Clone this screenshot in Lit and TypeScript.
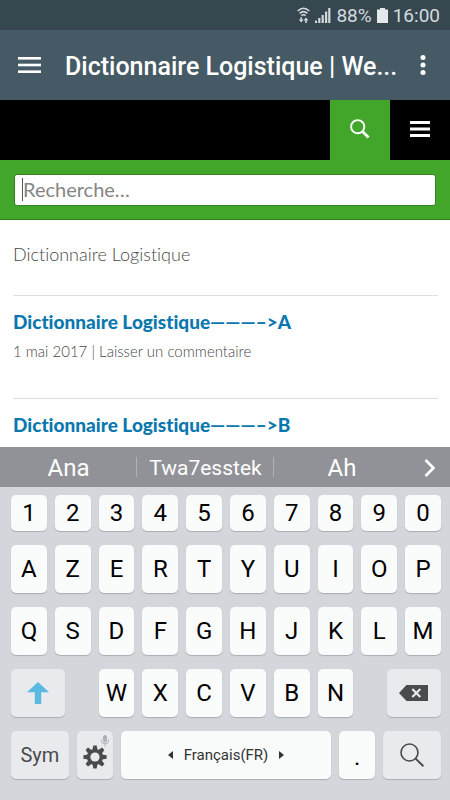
import { LitElement, html, css, svg, nothing } from "lit";
import { customElement } from "lit/decorators.js";

const wifi = svg`<svg width="13" height="17" viewBox="0 0 13 17" fill="none" stroke="#d3dade" stroke-width="1.5">
  <path d="M0.6 4Q6.5 -1.6 12.4 4M2.6 6.4Q6.5 2.8 10.4 6.4M4.4 8.6Q6.5 6.8 8.6 8.6"/>
  <path d="M4.2 10.2V13M9 16V13" stroke-width="1.6"/>
  <path d="M1.8 12.4H6.6L4.2 15.6ZM6.6 13.6H11.4L9 10.4Z" fill="#d3dade" stroke="none"/></svg>`;

const signal = svg`<svg width="16" height="16" viewBox="0 0 16 16" fill="#d3dade">
  <rect x="0" y="13.5" width="2" height="2.5"/><rect x="3.2" y="11" width="2.2" height="5"/>
  <rect x="6.6" y="8" width="2.2" height="8"/><rect x="10" y="4.5" width="2.2" height="11.5"/>
  <rect x="13.2" y="1" width="2.2" height="15"/></svg>`;

const battery = svg`<svg width="11" height="15" viewBox="0 0 11 15" fill="#e3e8ea">
  <path d="M3 0h5v1.5h3V15H0V1.5h3z"/></svg>`;

const bars = (w: number, h: number, t: number) => svg`<svg width=${w} height=${h} viewBox="0 0 ${w} ${h}" fill="#fff">
  <rect y="0" width=${w} height=${t}/><rect y=${(h - t) / 2} width=${w} height=${t}/><rect y=${h - t} width=${w} height=${t}/></svg>`;

const dots = svg`<svg width="6" height="20" viewBox="0 0 6 20" fill="#fff">
  <circle cx="3" cy="2.6" r="2.5"/><circle cx="3" cy="10" r="2.5"/><circle cx="3" cy="17.4" r="2.5"/></svg>`;

const siteSearch = svg`<svg width="20" height="20" viewBox="0 0 20 20" fill="none" stroke="#fff">
  <circle cx="7.7" cy="7.7" r="6.6" stroke-width="1.9"/><path d="M12.2 12.2L18.6 18.4" stroke-width="2.8"/></svg>`;

const chevron = svg`<svg width="12" height="18" viewBox="0 0 12 18" fill="none" stroke="#fff" stroke-width="2.6">
  <path d="M1.5 1L9.5 9L1.5 17"/></svg>`;

const shift = svg`<svg width="22" height="22" viewBox="0 0 22 22" fill="#5bb8de">
  <path d="M11 0L22 10.2H14.2V22H7.8V10.2H0z"/></svg>`;

const backspace = svg`<svg width="29" height="16" viewBox="0 0 29 16">
  <path d="M7.5 0H29V16H7.5L0 8z" fill="#4a4b4d"/>
  <path d="M13.3 4L21.3 12M21.3 4L13.3 12" stroke="#e8eaed" stroke-width="2.2"/></svg>`;

const gear = svg`<svg width="24" height="24" viewBox="-12 -12 24 24" fill="#4a4b4d">
  ${[0, 45, 90, 135].map((a) => svg`<path d="M-1.7 -11.6H1.7L2.5 -7V7L1.7 11.6H-1.7L-2.5 7V-7z" transform="rotate(${a})"/>`)}
  <circle r="8"/><circle r="4.6" fill="#e8eaed"/></svg>`;

const mic = svg`<svg width="8" height="12" viewBox="0 0 8 12" fill="none" stroke="#aeb1b6">
  <rect x="2.5" y="0.5" width="3" height="6.5" rx="1.5" fill="#aeb1b6"/><path d="M0.5 4.5V5.5Q0.5 8.8 4 8.8Q7.5 8.8 7.5 5.5V4.5M4 8.8V11.5"/></svg>`;

const keySearch = svg`<svg width="24" height="24" viewBox="0 0 24 24" fill="none" stroke="#4a4b4d">
  <circle cx="9.5" cy="9.5" r="8.5" stroke-width="1.6"/><path d="M15.6 15.6L23.4 23.2" stroke-width="2"/></svg>`;

const triangle = (d: string) => svg`<svg width="5" height="8" viewBox="0 0 5 8" fill="#333"><path d=${d}/></svg>`;

@customElement("soft-keyboard")
class SoftKeyboard extends LitElement {
  static styles = css`
    :host { display: block; font-family: Roboto, sans-serif; }
    button {
      font: inherit; border: 0; margin: 0; padding: 0; background: none; color: inherit;
      display: flex; align-items: center; justify-content: center;
    }
    .suggestions {
      display: grid; grid-template-columns: 137fr 137fr 136fr 40fr; height: 40px;
      background: #919297; color: #fff; font-size: 24px;
    }
    .suggestions button { padding-top: 2px; }
    .suggestion {
      white-space: nowrap;
      background: linear-gradient(#b0b1b5, #b0b1b5) right center / 1px 20px no-repeat;
    }
    .last { background: none; }
    .long { font-size: 21px; }
    .pad {
      background: #d3d7dc; padding: 8px 9px 21px 11px; color: #000; font-size: 24px;
      display: flex; flex-direction: column; gap: 14px;
    }
    .row { display: grid; grid-template-columns: repeat(10, 1fr); gap: 8px; grid-auto-rows: 48px; }
    .digits { grid-auto-rows: 36px; }
    .bottom { grid-template-columns: 58fr 36fr 211fr 36fr 58fr; }
    .key { background: #fafbfb; border-radius: 5px; box-shadow: 0 1px 1px #a9adb3; }
    .soft { background: #e8eaed; color: #4a4b4d; }
    .shift { grid-column: span 2; width: 68%; }
    .delete { grid-column: span 2; width: 68%; justify-self: end; }
    .sym { font-size: 20px; }
    .space { font-size: 15px; gap: 11px; color: #333; }
    .settings { position: relative; }
    .gear { display: flex; padding-top: 3px; }
    .mic { position: absolute; display: flex; top: 4px; right: 4px; }
    .dot { padding-top: 4px; }
  `;

  key(k: string) {
    return html`<button class="key">${k}</button>`;
  }

  render() {
    return html`
      <div class="suggestions">
        <button class="suggestion">Ana</button>
        <button class="suggestion long">Twa7esstek</button>
        <button class="suggestion last">Ah</button>
        <button class="more" aria-label="Plus de suggestions">${chevron}</button>
      </div>
      <div class="pad">
        <div class="row digits">${[..."1234567890"].map((k) => this.key(k))}</div>
        <div class="row">${[..."AZERTYUIOP"].map((k) => this.key(k))}</div>
        <div class="row">${[..."QSDFGHJKLM"].map((k) => this.key(k))}</div>
        <div class="row">
          <button class="key soft shift" aria-label="Majuscule">${shift}</button>
          ${[..."WXCVBN"].map((k) => this.key(k))}
          <button class="key soft delete" aria-label="Effacer">${backspace}</button>
        </div>
        <div class="row bottom">
          <button class="key soft sym">Sym</button>
          <button class="key soft settings" aria-label="Paramètres">
            <span class="gear">${gear}</span><span class="mic">${mic}</span>
          </button>
          <button class="key space">${triangle("M5 0V8L0 4z")}<span>Français(FR)</span>${triangle("M0 0V8L5 4z")}</button>
          <button class="key dot">.</button>
          <button class="key soft" aria-label="Rechercher">${keySearch}</button>
        </div>
      </div>
    `;
  }
}

const posts = [
  { letter: "A", date: "1 mai 2017" },
  { letter: "B", date: "" },
];

@customElement("app-root")
class AppRoot extends LitElement {
  static styles = css`
    :host {
      display: flex; flex-direction: column; height: 100vh; overflow: hidden;
      background: #fff; font-family: Lato, sans-serif; font-variant-ligatures: none;
    }
    button {
      border: 0; margin: 0; padding: 0; background: none;
      display: flex; align-items: center; justify-content: center;
    }
    .status {
      flex: none; height: 30px; background: #37474f; color: #d3dade;
      font: 19px Roboto, sans-serif; display: flex; align-items: center;
      justify-content: flex-end; gap: 5px; padding-right: 10px;
    }
    .appbar {
      flex: none; height: 70px; background: #455a64; color: #fff;
      display: flex; align-items: center; padding: 0 24px 0 18px;
    }
    .appbar h1 {
      flex: 1; margin: 0; padding: 4px 0 0 24px; min-width: 0; white-space: nowrap;
      font: 500 25px/30px Roboto, sans-serif;
    }
    .site { flex: none; height: 60px; background: #000; display: flex; justify-content: flex-end; }
    .site button { width: 60px; }
    .site .find { background: #41a62a; padding-bottom: 3px; }
    .site .menu { padding-bottom: 2px; }
    .search {
      flex: none; background: #41a62a; padding: 14px 14px 13px; position: relative;
      border-bottom: 1px solid #338221;
    }
    .search input {
      display: block; width: 100%; height: 32px; box-sizing: border-box; margin: 0;
      border: 1px solid #338221; border-radius: 3px; padding: 0 8px 3px; background: #fff;
      font: 20px Lato, sans-serif; color: #2b2b2b; outline: 0;
    }
    .search input::placeholder { color: #858585; opacity: 1; }
    .caret { position: absolute; left: 22px; top: 18px; width: 1px; height: 23px; background: #555; }
    main { flex: 1; min-height: 0; overflow: hidden; padding: 0 12px 0 13px; color: #484848; font-weight: 300; }
    .intro { margin: 0; padding: 22px 0 29px; font-size: 18px; line-height: 24px; }
    article { border-top: 1px solid #dedede; padding: 14px 0 0; }
    h2 { margin: 0; font-size: 19px; line-height: 24px; font-weight: 900; }
    h2 a { color: #0a78ae; text-decoration: none; }
    .meta { margin: 0; padding: 7px 0 37px; font-size: 15px; line-height: 20px; }
    .meta a { color: inherit; text-decoration: none; }
    soft-keyboard { flex: none; }
  `;

  render() {
    return html`
      <div class="status">${wifi}${signal}<span>88%</span>${battery}<span>16:00</span></div>
      <header class="appbar">
        <button aria-label="Menu">${bars(23, 16, 2.6)}</button>
        <h1>Dictionnaire Logistique | We...</h1>
        <button aria-label="Options">${dots}</button>
      </header>
      <nav class="site">
        <button class="find" aria-label="Recherche">${siteSearch}</button>
        <button class="menu" aria-label="Menu du site">${bars(20, 16, 3)}</button>
      </nav>
      <form class="search">
        <input type="text" aria-label="Recherche" placeholder="Recherche…" />
        <span class="caret"></span>
      </form>
      <main>
        <p class="intro">Dictionnaire Logistique</p>
        ${posts.map(
          ({ letter, date }) => html`<article>
            <h2><a href="#${letter}">Dictionnaire Logistique———–>${letter}</a></h2>
            ${date
              ? html`<p class="meta">${date} | <a href="#comment-${letter}">Laisser un commentaire</a></p>`
              : nothing}
          </article>`
        )}
      </main>
      <soft-keyboard></soft-keyboard>
    `;
  }
}
